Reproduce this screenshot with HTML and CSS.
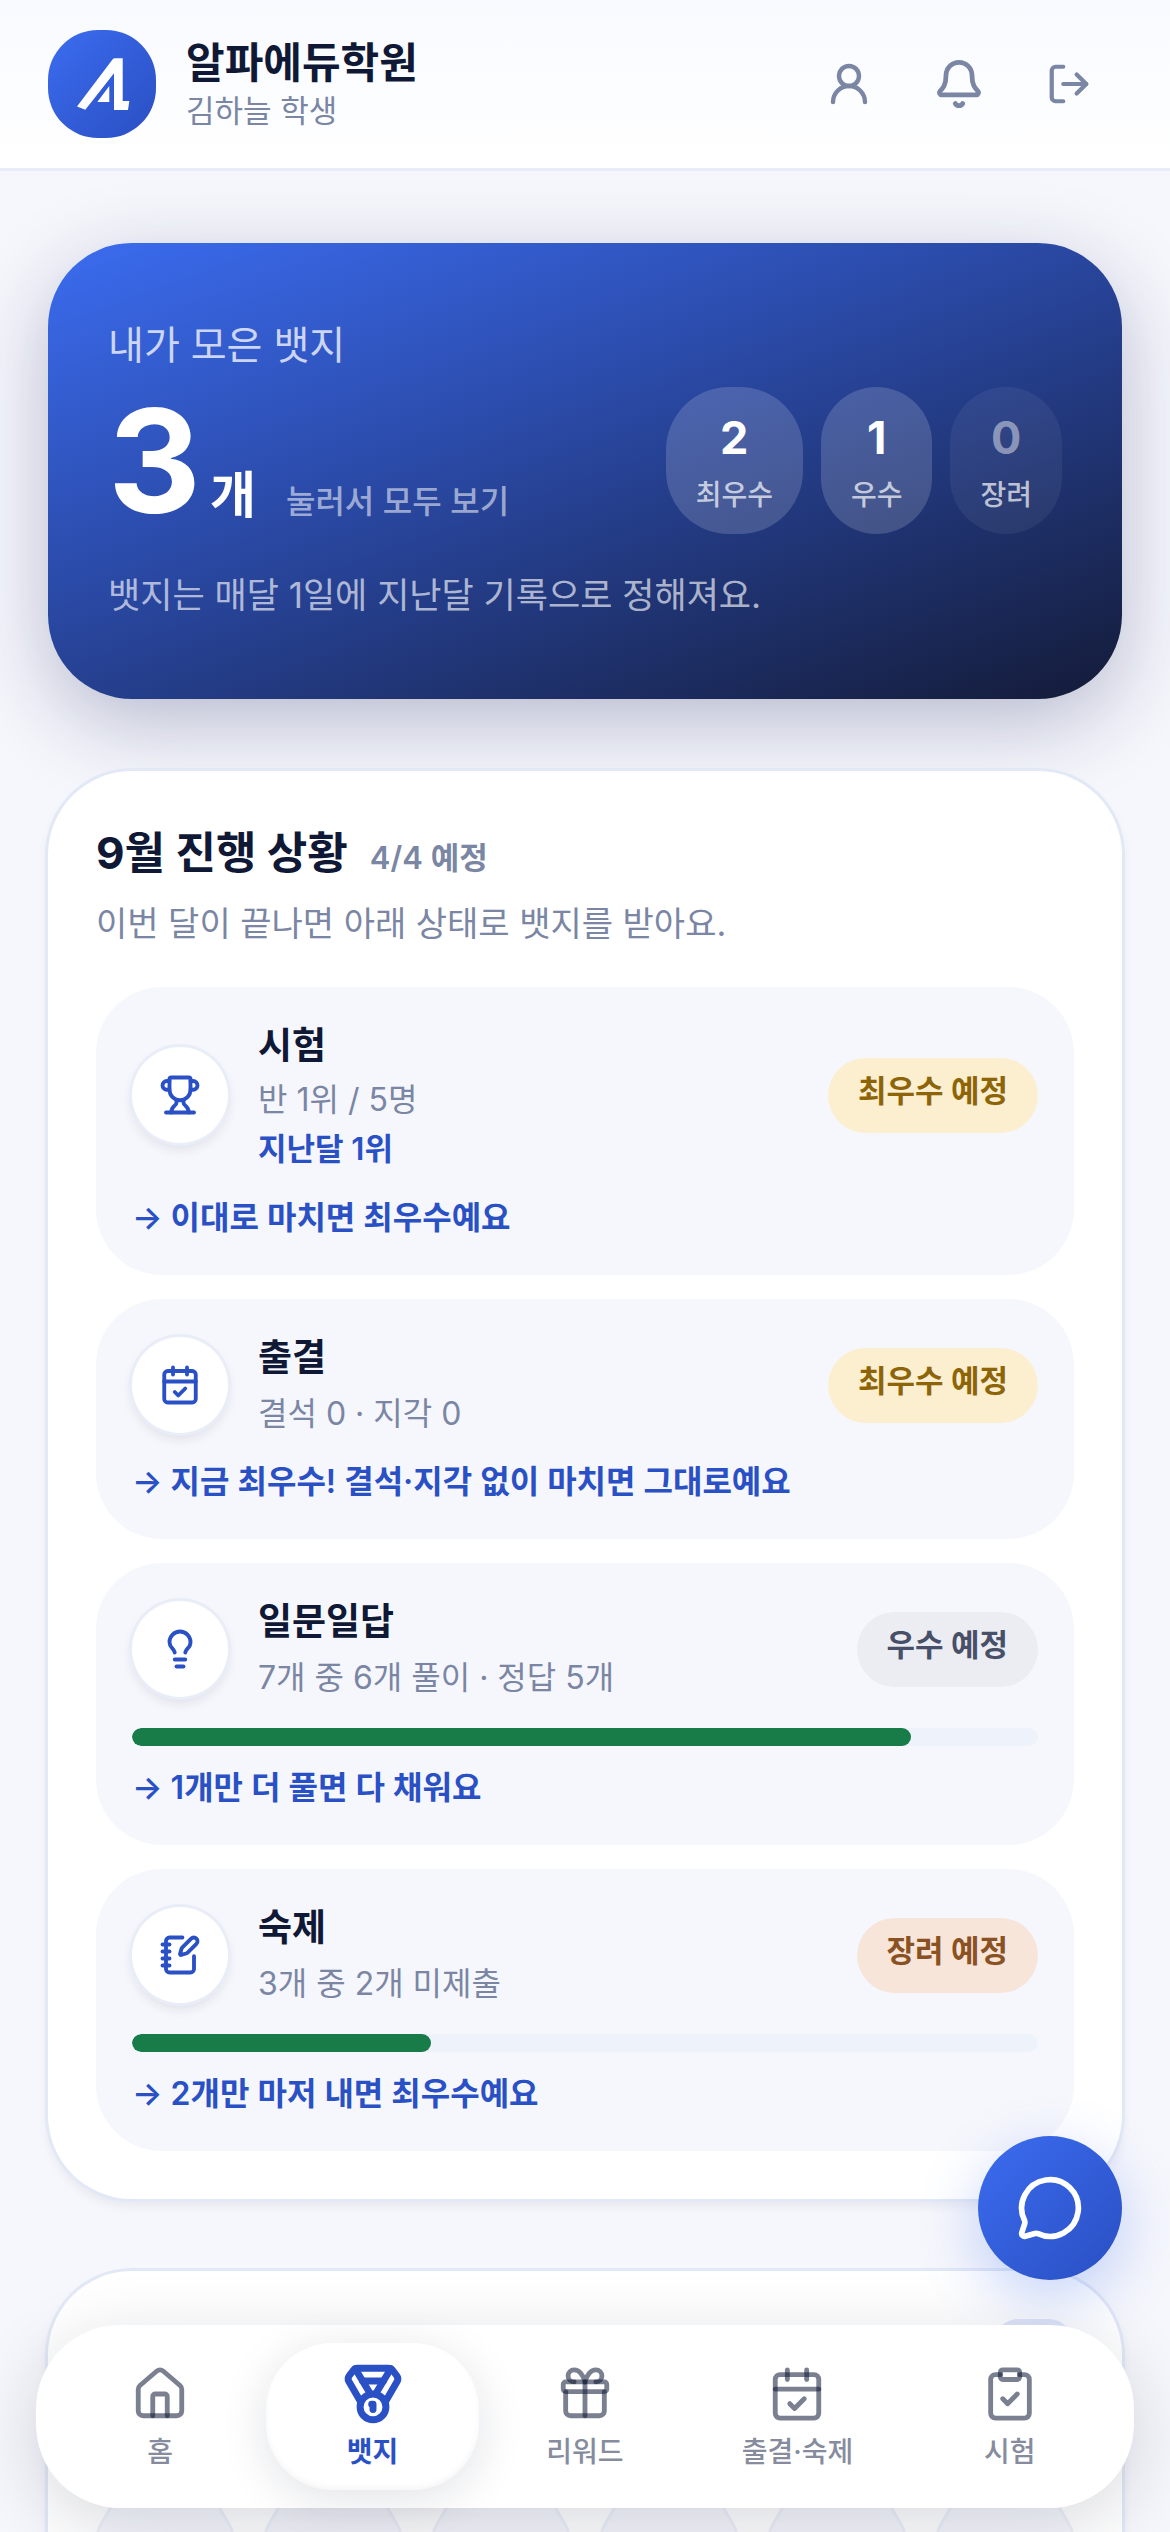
FILE: index.html
```html
<!DOCTYPE html>
<html lang="ko">
<head>
<meta charset="utf-8">
<meta name="viewport" content="width=device-width, initial-scale=1">
<title>알파에듀학원 - 뱃지</title>
<link rel="stylesheet" href="styles.css">
</head>
<body>
<div class="app">
  <header class="topbar">
    <svg class="logo" viewBox="0 0 108 108" aria-hidden="true">
      <defs>
        <linearGradient id="logoFill" x1="0" y1="0" x2="1" y2="1">
          <stop offset="0" stop-color="#3b6cf0"/>
          <stop offset="1" stop-color="#2a4fc2"/>
        </linearGradient>
      </defs>
      <rect width="108" height="108" rx="50" fill="url(#logoFill)"/>
      <path fill="#fff" d="M29 76.500 64.500 29.500Q65.500 28.300 67 28.300H74.700V71H81.300L80 80H66V43.300L37.300 79.700ZM61.300 56V72H49.300Z"/>
    </svg>
    <div class="brand">
      <h1 class="brand-name">알파에듀학원</h1>
      <p class="brand-user">김하늘 학생</p>
    </div>
    <div class="actions">
      <button class="icon-btn" type="button" aria-label="내 정보">
        <svg class="icon icon-user" viewBox="0 0 24 24"><circle cx="12" cy="8" r="5"/><path d="M20 21a8 8 0 0 0-16 0"/></svg>
      </button>
      <button class="icon-btn" type="button" aria-label="알림">
        <svg class="icon icon-bell" viewBox="0 0 24 24"><path d="M10.268 21a2 2 0 0 0 3.464 0"/><path d="M3.262 15.326A1 1 0 0 0 4 17h16a1 1 0 0 0 .74-1.673C19.410 13.956 18 12.499 18 8A6 6 0 0 0 6 8c0 4.499-1.411 5.956-2.738 7.326"/></svg>
      </button>
      <button class="icon-btn" type="button" aria-label="로그아웃">
        <svg class="icon icon-logout" viewBox="0 0 24 24"><path d="M9 21H5a2 2 0 0 1-2-2V5a2 2 0 0 1 2-2h4"/><path d="m16 17 5-5-5-5"/><path d="M21 12H9"/></svg>
      </button>
    </div>
  </header>

  <main class="content">
    <section class="hero">
      <p class="hero-label">내가 모은 뱃지</p>
      <div class="hero-row">
        <div class="hero-count">
          <strong class="hero-number">3</strong>
          <span class="hero-unit">개</span>
          <a class="hero-link" href="#collection">눌러서 모두 보기</a>
        </div>
        <ul class="tiers">
          <li class="tier"><b class="tier-count">2</b><span class="tier-name">최우수</span></li>
          <li class="tier"><b class="tier-count">1</b><span class="tier-name">우수</span></li>
          <li class="tier tier--empty"><b class="tier-count">0</b><span class="tier-name">장려</span></li>
        </ul>
      </div>
      <p class="hero-note">뱃지는 매달 1일에 지난달 기록으로 정해져요.</p>
    </section>

    <section class="card">
      <div class="card-head">
        <h2 class="card-title">9월 진행 상황</h2>
        <span class="card-meta">4/4 예정</span>
      </div>
      <p class="card-desc">이번 달이 끝나면 아래 상태로 뱃지를 받아요.</p>

      <ul class="items">
        <li class="item item--ranked">
          <div class="item-row">
            <span class="item-icon"><svg class="icon" viewBox="0 0 24 24"><path d="M10 14.660v1.626a2 2 0 0 1-.976 1.696A5 5 0 0 0 7 21.978"/><path d="M14 14.660v1.626a2 2 0 0 0 .976 1.696A5 5 0 0 1 17 21.978"/><path d="M18 9h1.500a1 1 0 0 0 0-5H18"/><path d="M4 22h16"/><path d="M6 9a6 6 0 0 0 12 0V3a1 1 0 0 0-1-1H7a1 1 0 0 0-1 1z"/><path d="M6 9H4.500a1 1 0 0 1 0-5H6"/></svg></span>
            <div class="item-text">
              <h3 class="item-title">시험</h3>
              <p class="item-sub">반 1위 / 5명</p>
              <p class="item-prev">지난달 1위</p>
            </div>
            <span class="badge badge--gold">최우수 예정</span>
          </div>
          <p class="item-hint">→ 이대로 마치면 최우수예요</p>
        </li>

        <li class="item">
          <div class="item-row">
            <span class="item-icon"><svg class="icon" viewBox="0 0 24 24"><path d="M8 2v4"/><path d="M16 2v4"/><rect width="18" height="18" x="3" y="4" rx="2"/><path d="M3 10h18"/><path d="m9 16 2 2 4-4"/></svg></span>
            <div class="item-text">
              <h3 class="item-title">출결</h3>
              <p class="item-sub">결석 0 · 지각 0</p>
            </div>
            <span class="badge badge--gold">최우수 예정</span>
          </div>
          <p class="item-hint">→ 지금 최우수! 결석·지각 없이 마치면 그대로예요</p>
        </li>

        <li class="item">
          <div class="item-row">
            <span class="item-icon"><svg class="icon" viewBox="0 0 24 24"><path d="M15 14c.2-1 .7-1.700 1.500-2.500 1-.9 1.500-2.200 1.500-3.500A6 6 0 0 0 6 8c0 1 .2 2.200 1.500 3.500.7.7 1.300 1.500 1.500 2.500"/><path d="M9 18h6"/><path d="M10 22h4"/></svg></span>
            <div class="item-text">
              <h3 class="item-title">일문일답</h3>
              <p class="item-sub">7개 중 6개 풀이 · 정답 5개</p>
            </div>
            <span class="badge badge--silver">우수 예정</span>
          </div>
          <div class="bar" role="progressbar" aria-label="일문일답 풀이" aria-valuemin="0" aria-valuemax="7" aria-valuenow="6"><div class="bar-fill" style="width:86%"></div></div>
          <p class="item-hint">→ 1개만 더 풀면 다 채워요</p>
        </li>

        <li class="item">
          <div class="item-row">
            <span class="item-icon"><svg class="icon" viewBox="0 0 24 24"><path d="M13.400 2H6a2 2 0 0 0-2 2v16a2 2 0 0 0 2 2h12a2 2 0 0 0 2-2v-7.400"/><path d="M2 6h4"/><path d="M2 10h4"/><path d="M2 14h4"/><path d="M2 18h4"/><path d="M21.378 5.626a1 1 0 1 0-3.004-3.004l-5.010 5.012a2 2 0 0 0-.506.854l-.837 2.870a.5.5 0 0 0 .62.62l2.870-.837a2 2 0 0 0 .854-.506z"/></svg></span>
            <div class="item-text">
              <h3 class="item-title">숙제</h3>
              <p class="item-sub">3개 중 2개 미제출</p>
            </div>
            <span class="badge badge--bronze">장려 예정</span>
          </div>
          <div class="bar" role="progressbar" aria-label="숙제 제출" aria-valuemin="0" aria-valuemax="3" aria-valuenow="1"><div class="bar-fill" style="width:33%"></div></div>
          <p class="item-hint">→ 2개만 마저 내면 최우수예요</p>
        </li>
      </ul>
    </section>

    <section class="card" id="collection">
      <div class="collection-head">
        <h2 class="collection-title">시험</h2>
        <span class="collection-count" aria-hidden="true"></span>
      </div>
      <div class="hexes" aria-hidden="true">
        <svg class="hex" viewBox="0 0 138 120"><path d="M38 2h62q4 0 6 3l29 51q2 4 0 8l-29 51q-2 3-6 3H38q-4 0-6-3L3 64q-2-4 0-8L32 5q2-3 6-3z"/></svg>
        <svg class="hex" viewBox="0 0 138 120"><path d="M38 2h62q4 0 6 3l29 51q2 4 0 8l-29 51q-2 3-6 3H38q-4 0-6-3L3 64q-2-4 0-8L32 5q2-3 6-3z"/></svg>
        <svg class="hex" viewBox="0 0 138 120"><path d="M38 2h62q4 0 6 3l29 51q2 4 0 8l-29 51q-2 3-6 3H38q-4 0-6-3L3 64q-2-4 0-8L32 5q2-3 6-3z"/></svg>
        <svg class="hex" viewBox="0 0 138 120"><path d="M38 2h62q4 0 6 3l29 51q2 4 0 8l-29 51q-2 3-6 3H38q-4 0-6-3L3 64q-2-4 0-8L32 5q2-3 6-3z"/></svg>
        <svg class="hex" viewBox="0 0 138 120"><path d="M38 2h62q4 0 6 3l29 51q2 4 0 8l-29 51q-2 3-6 3H38q-4 0-6-3L3 64q-2-4 0-8L32 5q2-3 6-3z"/></svg>
        <svg class="hex" viewBox="0 0 138 120"><path d="M38 2h62q4 0 6 3l29 51q2 4 0 8l-29 51q-2 3-6 3H38q-4 0-6-3L3 64q-2-4 0-8L32 5q2-3 6-3z"/></svg>
      </div>
    </section>
  </main>

  <button class="chat" type="button" aria-label="채팅 상담">
    <svg class="icon" viewBox="0 0 24 24"><path d="M2.992 16.342a2 2 0 0 1 .094 1.167l-1.065 3.290a1 1 0 0 0 1.236 1.168l3.413-.998a2 2 0 0 1 1.099.092 10 10 0 1 0-4.777-4.719"/></svg>
  </button>

  <nav class="tabs" aria-label="주 메뉴">
    <a class="tab" href="#home">
      <span class="tab-icon"><svg class="icon" viewBox="0 0 24 24"><path d="M15 21v-8a1 1 0 0 0-1-1h-4a1 1 0 0 0-1 1v8"/><path d="M3 10a2 2 0 0 1 .709-1.528l7-5.999a2 2 0 0 1 2.582 0l7 5.999A2 2 0 0 1 21 10v9a2 2 0 0 1-2 2H5a2 2 0 0 1-2-2z"/></svg></span>
      <span>홈</span>
    </a>
    <a class="tab tab--active" href="#badges" aria-current="page">
      <span class="tab-icon"><svg class="icon" viewBox="0 0 24 24"><path d="M7.210 15 2.660 7.140a2 2 0 0 1 .13-2.200L4.400 2.800A2 2 0 0 1 6 2h12a2 2 0 0 1 1.600.8l1.600 2.140a2 2 0 0 1 .14 2.200L16.790 15"/><path d="M11 12 5.120 2.200"/><path d="m13 12 5.880-9.800"/><path d="M8 7h8"/><circle cx="12" cy="17" r="5"/><path d="M12 18v-2h-.5"/></svg></span>
      <span>뱃지</span>
    </a>
    <a class="tab" href="#rewards">
      <span class="tab-icon"><svg class="icon" viewBox="0 0 24 24"><path d="M12 7v14"/><path d="M20 11v8a2 2 0 0 1-2 2H6a2 2 0 0 1-2-2v-8"/><path d="M7.500 7a1 1 0 0 1 0-5A4.800 8 0 0 1 12 7a4.800 8 0 0 1 4.500-5 1 1 0 0 1 0 5"/><rect x="3" y="7" width="18" height="4" rx="1"/></svg></span>
      <span>리워드</span>
    </a>
    <a class="tab" href="#attendance">
      <span class="tab-icon"><svg class="icon" viewBox="0 0 24 24"><path d="M8 2v4"/><path d="M16 2v4"/><rect width="18" height="18" x="3" y="4" rx="2"/><path d="M3 10h18"/><path d="m9 16 2 2 4-4"/></svg></span>
      <span>출결·숙제</span>
    </a>
    <a class="tab" href="#exams">
      <span class="tab-icon"><svg class="icon" viewBox="0 0 24 24"><rect width="8" height="4" x="8" y="2" rx="1"/><path d="M16 4h2a2 2 0 0 1 2 2v14a2 2 0 0 1-2 2H6a2 2 0 0 1-2-2V6a2 2 0 0 1 2-2h2"/><path d="m9 14 2 2 4-4"/></svg></span>
      <span>시험</span>
    </a>
  </nav>
</div>
</body>
</html>
```
FILE: styles.css
```css
:root {
  --ink: #0f1835;
  --muted: #7a86a3;
  --blue: #2a50c6;
  --line: #e2e8f6;
  --page: #f6f7fc;
}

* {
  box-sizing: border-box;
  margin: 0;
  padding: 0;
}

body {
  background: var(--page);
  color: var(--ink);
  font-family: Inter, "Noto Sans CJK KR", sans-serif;
}

ul {
  list-style: none;
}

a {
  color: inherit;
  text-decoration: none;
}

button {
  border: 0;
  background: none;
  color: inherit;
  font: inherit;
  cursor: pointer;
}

.icon {
  display: block;
  fill: none;
  stroke: currentColor;
  stroke-width: 2;
  stroke-linecap: round;
  stroke-linejoin: round;
}

/* App shell: the page scrolls under the header and the tab bar */
.app {
  position: relative;
  display: flex;
  flex-direction: column;
  height: 100vh;
  overflow: hidden;
}

.topbar {
  display: flex;
  align-items: center;
  gap: 30px;
  padding: 30px 48px;
  border-bottom: 3px solid #e8ecf8;
  background: linear-gradient(#f8faff, #fff);
}

.logo {
  flex: none;
  width: 108px;
  height: 108px;
}

.brand {
  flex: 1;
}

.brand-name {
  font-size: 42px;
  font-weight: 700;
  line-height: 54px;
}

.brand-user {
  color: var(--muted);
  font-size: 31px;
  line-height: 42px;
}

.actions {
  display: flex;
  gap: 4px;
}

.icon-btn {
  display: grid;
  place-items: center;
  width: 106px;
  height: 108px;
  color: var(--muted);
}

.icon-user {
  width: 48px;
  stroke-width: 2.2;
}

.icon-bell {
  width: 52px;
  stroke-width: 2.2;
}

.icon-logout {
  width: 46px;
  stroke-width: 2.2;
}

.content {
  display: flex;
  flex: 1;
  flex-direction: column;
  gap: 72px;
  min-height: 0;
  padding: 72px 48px 240px;
  overflow-y: auto;
  scrollbar-width: none;
}

.content > * {
  flex: none;
}

/* Summary */
.hero {
  padding: 72px 60px 78px;
  border-radius: 84px;
  background: linear-gradient(160deg, #3b6cf0 0%, #2c4dae 38%, #141b38 100%);
  box-shadow: 0 24px 84px rgba(20, 28, 90, 0.28);
  color: #fff;
}

.hero-label {
  color: rgba(255, 255, 255, 0.75);
  font-size: 39px;
  line-height: 60px;
}

.hero-row {
  display: flex;
  align-items: center;
  justify-content: space-between;
  margin-top: 12px;
}

.hero-count {
  display: flex;
  align-items: baseline;
}

.hero-number {
  font-size: 144px;
  font-weight: 700;
  line-height: 147px;
}

.hero-unit {
  margin-left: 9px;
  font-size: 50px;
  font-weight: 700;
}

.hero-link {
  margin-left: 30px;
  color: rgba(255, 255, 255, 0.55);
  font-size: 32px;
  font-weight: 500;
}

.tiers {
  display: flex;
  gap: 18px;
}

.tier {
  display: flex;
  flex-direction: column;
  align-items: center;
  padding: 18px 30px 15px;
  border-radius: 63px;
  background: rgba(255, 255, 255, 0.16);
}

.tier-count {
  font-size: 45px;
  font-weight: 700;
  line-height: 66px;
}

.tier-name {
  color: rgba(255, 255, 255, 0.7);
  font-size: 28px;
  font-weight: 500;
  line-height: 48px;
}

.tier--empty {
  background: rgba(255, 255, 255, 0.06);
}

.tier--empty .tier-count {
  color: rgba(255, 255, 255, 0.45);
}

.hero-note {
  margin-top: 36px;
  color: rgba(255, 255, 255, 0.65);
  font-size: 35px;
  line-height: 51px;
}

/* Cards */
.card {
  padding: 48px;
  border-radius: 84px;
  background: #fff;
  box-shadow: 0 0 0 3px var(--line), 0 6px 12px rgba(20, 28, 60, 0.08);
}

.card-head {
  display: flex;
  align-items: baseline;
  gap: 22px;
}

.card-title {
  font-size: 44px;
  font-weight: 700;
  line-height: 68px;
}

.card-meta {
  color: var(--muted);
  font-size: 31px;
  font-weight: 600;
}

.card-desc {
  margin-top: 10px;
  color: var(--muted);
  font-size: 34px;
  line-height: 54px;
}

.items {
  display: flex;
  flex-direction: column;
  gap: 24px;
  margin-top: 36px;
}

.item {
  padding: 30px 36px;
  border-radius: 66px;
  background: var(--page);
}

.item-row {
  display: flex;
  align-items: center;
  gap: 30px;
}

.item-icon {
  display: grid;
  flex: none;
  place-items: center;
  width: 96px;
  height: 96px;
  border-radius: 50%;
  background: #fff;
  box-shadow: 0 0 0 3px #e8edf8, 0 6px 12px rgba(20, 28, 60, 0.1);
  color: var(--blue);
}

.item-icon .icon {
  width: 42px;
  stroke-width: 2.2;
}

.item-text {
  flex: 1;
}

.item-title {
  font-size: 37px;
  font-weight: 700;
  line-height: 58px;
}

.item-sub {
  color: var(--muted);
  font-size: 32px;
  line-height: 54px;
}

.item-prev {
  color: var(--blue);
  font-size: 31px;
  font-weight: 600;
}

.item--ranked .item-sub,
.item--ranked .item-prev {
  line-height: 49px;
}

.item-hint {
  margin-top: 14px;
  color: var(--blue);
  font-size: 32px;
  font-weight: 600;
  line-height: 54px;
}

.item--ranked .item-hint {
  margin-top: 18px;
}

.badge {
  flex: none;
  padding: 9px 30px 18px;
  border-radius: 38px;
  font-size: 31px;
  font-weight: 700;
  line-height: 48px;
}

.badge--gold {
  background: #fbefd0;
  color: #8d6508;
}

.badge--silver {
  background: #ecedf2;
  color: #475068;
}

.badge--bronze {
  background: #f7e5da;
  color: #8a5122;
}

.bar {
  height: 18px;
  margin-top: 23px;
  border-radius: 9px;
  background: #edf2fb;
  overflow: hidden;
}

.bar-fill {
  height: 100%;
  border-radius: 9px;
  background: #187c48;
}

.bar + .item-hint {
  margin-top: 15px;
}

/* Collection */
.collection-head {
  display: flex;
  align-items: flex-start;
  justify-content: space-between;
}

.collection-title {
  font-size: 44px;
  font-weight: 700;
  line-height: 57px;
}

.collection-count {
  width: 81px;
  height: 51px;
  border-radius: 26px;
  background: #e3e8fa;
}

.hexes {
  display: grid;
  grid-template-columns: repeat(6, 1fr);
  gap: 30px;
  margin-top: 96px;
}

.hex {
  display: block;
  width: 100%;
  fill: #f6f7fc;
  stroke: #edf0f9;
  stroke-width: 3;
}

/* Floating controls */
.chat {
  position: absolute;
  right: 48px;
  bottom: 252px;
  display: grid;
  place-items: center;
  width: 144px;
  height: 144px;
  border-radius: 50%;
  background: linear-gradient(135deg, #3b6cf0, #2a4fc2);
  box-shadow: 0 18px 60px rgba(59, 108, 240, 0.3);
  color: #fff;
}

.chat .icon {
  width: 68px;
}

.tabs {
  position: absolute;
  right: 36px;
  bottom: 24px;
  left: 36px;
  display: grid;
  grid-template-columns: repeat(5, 1fr);
  padding: 18px;
  border-radius: 84px;
  background: #fff;
  box-shadow: 0 18px 72px rgba(20, 24, 50, 0.16);
}

.tab {
  display: flex;
  flex-direction: column;
  align-items: center;
  gap: 6px;
  padding: 21px 0 15px;
  border-radius: 66px;
  color: #868c9e;
  font-size: 28px;
  font-weight: 500;
  line-height: 45px;
}

.tab-icon {
  display: grid;
  place-items: center;
  height: 60px;
  color: rgba(15, 24, 53, 0.55);
}

.tab-icon .icon {
  width: 58px;
}

.tab--active {
  background: #fff;
  box-shadow: 0 9px 48px rgba(20, 24, 50, 0.12), inset 0 -3px 6px rgba(20, 24, 50, 0.04);
  color: var(--blue);
  font-weight: 700;
}

.tab--active .tab-icon {
  color: var(--blue);
}

.tab--active .icon {
  width: 62px;
  stroke-width: 2.7;
}
```
